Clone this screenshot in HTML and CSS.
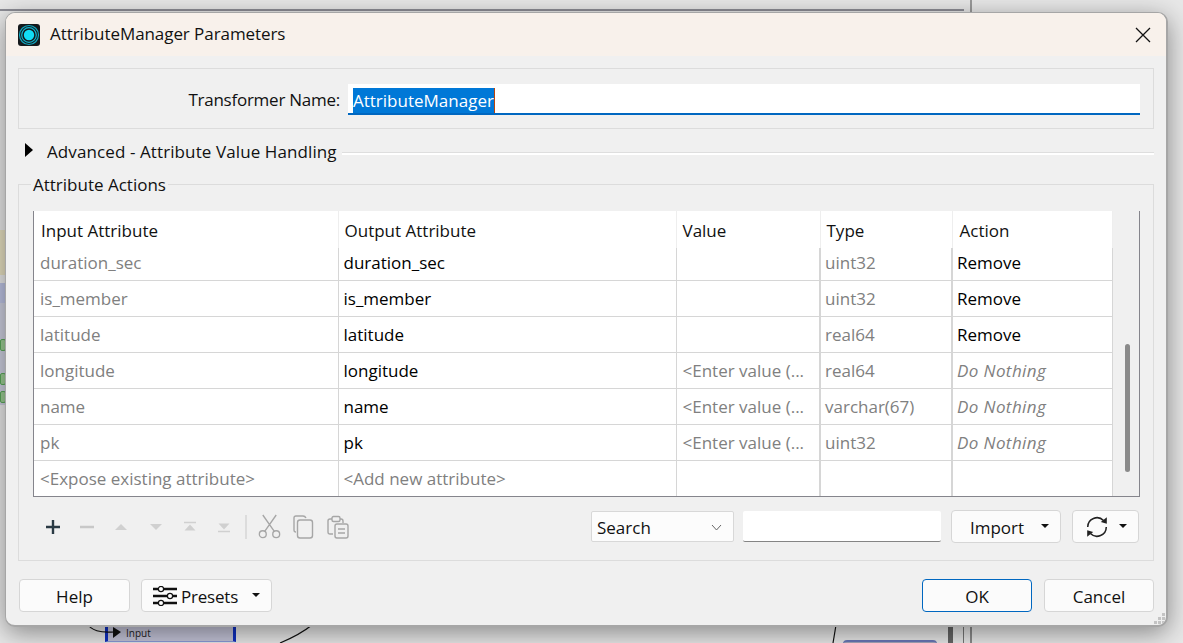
FILE: index.html
```html
<!DOCTYPE html>
<html lang="en">

<head>
    <meta charset="UTF-8">
    <title>AttributeManager Parameters</title>
    <link rel="stylesheet" href="styles.css">
</head>

<body>
    <div class="desktop">
        <!-- workspace showing behind the dialog -->
        <div class="bg-topline"></div>
        <div class="bg-vline"></div>
        <div class="bg-beige"></div>
        <div class="bg-blue"></div>
        <div class="bg-blue-light"></div>
        <div class="bg-green bg-green1"></div>
        <div class="bg-green bg-green2"></div>
        <div class="bg-green bg-green3"></div>
        <div class="bg-node"><span class="bg-node-label">Input</span></div>
        <div class="bg-node2"></div>
        <div class="bg-bar1"></div>
        <div class="bg-bar2"></div>
        <div class="bg-bar3"></div>
        <svg class="bg-wires" width="1183" height="643" viewBox="0 0 1183 643">
            <path d="M85 622 C92 631 100 633 114 632" fill="none" stroke="#111" stroke-width="1.2" />
            <path d="M113 627 L121 632 L113 638 Z" fill="#111" />
            <path d="M312 625 C302 633 292 638 280 643" fill="none" stroke="#111" stroke-width="1.2" />
            <path d="M836 625 L833 643" fill="none" stroke="#111" stroke-width="1.2" />
        </svg>

        <div class="dialog">
            <div class="titlebar">
                <svg class="app-icon" width="22" height="22" viewBox="0 0 22 22">
                    <rect x="0" y="0" width="22" height="22" rx="3" fill="#14191c" />
                    <circle cx="11" cy="11" r="9.5" fill="none" stroke="#0fa5bd" stroke-width="1.2" />
                    <circle cx="11" cy="11" r="7.3" fill="none" stroke="#0fb5d0" stroke-width="1.2" />
                    <circle cx="11" cy="11" r="5.2" fill="#12dcf5" />
                </svg>
                <span class="title-text">AttributeManager Parameters</span>
                <svg class="close-icon" width="16" height="16" viewBox="0 0 16 16">
                    <path d="M1 1 L15 15 M15 1 L1 15" stroke="#111" stroke-width="1.3" fill="none" />
                </svg>
            </div>

            <div class="content">
                <div class="name-group">
                    <label class="name-label" for="tname">Transformer Name:</label>
                    <div class="name-input" id="tname"><span class="selected">AttributeManager</span><span class="caret"></span></div>
                </div>

                <div class="advanced">
                    <span class="arrow-right"></span>
                    <span class="advanced-text">Advanced - Attribute Value Handling</span>
                    <span class="advanced-line"></span>
                </div>

                <fieldset class="actions">
                    <legend>Attribute Actions</legend>

                    <div class="table-wrap">
                        <table class="attr-table">
                            <colgroup>
                                <col class="col-input">
                                <col class="col-output">
                                <col class="col-value">
                                <col class="col-type">
                                <col class="col-action">
                            </colgroup>
                            <thead>
                                <tr>
                                    <th>Input Attribute</th>
                                    <th>Output Attribute</th>
                                    <th>Value</th>
                                    <th>Type</th>
                                    <th>Action</th>
                                </tr>
                            </thead>
                            <tbody>
                                <tr class="clipped">
                                    <td class="muted">duration_sec</td>
                                    <td>duration_sec</td>
                                    <td></td>
                                    <td class="muted">uint32</td>
                                    <td>Remove</td>
                                </tr>
                                <tr>
                                    <td class="muted">is_member</td>
                                    <td>is_member</td>
                                    <td></td>
                                    <td class="muted">uint32</td>
                                    <td>Remove</td>
                                </tr>
                                <tr>
                                    <td class="muted">latitude</td>
                                    <td>latitude</td>
                                    <td></td>
                                    <td class="muted">real64</td>
                                    <td>Remove</td>
                                </tr>
                                <tr>
                                    <td class="muted">longitude</td>
                                    <td>longitude</td>
                                    <td class="muted">&lt;Enter value (...</td>
                                    <td class="muted">real64</td>
                                    <td class="muted italic">Do Nothing</td>
                                </tr>
                                <tr>
                                    <td class="muted">name</td>
                                    <td>name</td>
                                    <td class="muted">&lt;Enter value (...</td>
                                    <td class="muted">varchar(67)</td>
                                    <td class="muted italic">Do Nothing</td>
                                </tr>
                                <tr>
                                    <td class="muted">pk</td>
                                    <td>pk</td>
                                    <td class="muted">&lt;Enter value (...</td>
                                    <td class="muted">uint32</td>
                                    <td class="muted italic">Do Nothing</td>
                                </tr>
                                <tr>
                                    <td class="muted">&lt;Expose existing attribute&gt;</td>
                                    <td class="muted">&lt;Add new attribute&gt;</td>
                                    <td></td>
                                    <td></td>
                                    <td></td>
                                </tr>
                            </tbody>
                        </table>
                        <div class="scrollbar"><div class="thumb"></div></div>
                    </div>

                    <div class="toolbar">
                        <div class="tools">
                            <svg class="tool" width="16" height="16" viewBox="0 0 16 16"><path d="M8 1 V15 M1 8 H15" stroke="#2a3a44" stroke-width="2.4" /></svg>
                            <svg class="tool" width="16" height="16" viewBox="0 0 16 16"><path d="M1 8 H15" stroke="#c8c8c8" stroke-width="2.4" /></svg>
                            <svg class="tool" width="16" height="16" viewBox="0 0 16 16"><path d="M2 11 L8 5 L14 11 Z" fill="#d0d0d0" /></svg>
                            <svg class="tool" width="16" height="16" viewBox="0 0 16 16"><path d="M2 5 L14 5 L8 11 Z" fill="#d0d0d0" /></svg>
                            <svg class="tool" width="16" height="16" viewBox="0 0 16 16"><path d="M2 3.5 H14" stroke="#d0d0d0" stroke-width="1.5" /><path d="M2.5 11.5 L8 5.5 L13.5 11.5 Z" fill="#d0d0d0" /></svg>
                            <svg class="tool" width="16" height="16" viewBox="0 0 16 16"><path d="M2 12.5 H14" stroke="#d0d0d0" stroke-width="1.5" /><path d="M2.5 4.5 L13.5 4.5 L8 10.5 Z" fill="#d0d0d0" /></svg>
                        </div>
                        <span class="tool-sep"></span>
                        <div class="tools-edit">
                            <svg width="23" height="25" viewBox="0 0 24 26" fill="none" stroke="#a6a6a6" stroke-width="1.4">
                                <circle cx="5" cy="21" r="3.6" />
                                <circle cx="19" cy="21" r="3.6" />
                                <path d="M7 18 L19 1 M17 18 L5 1" />
                            </svg>
                            <svg width="22" height="24" viewBox="0 0 22 24" fill="none" stroke="#a6a6a6" stroke-width="1.4">
                                <path d="M3 17 Q1 17 1 15 V3 Q1 1 3 1 H10 Q12 1 13 3" />
                                <rect x="4.5" y="5" width="15" height="18" rx="2.5" />
                            </svg>
                            <svg width="22" height="24" viewBox="0 0 22 24" fill="none" stroke="#a6a6a6" stroke-width="1.4">
                                <path d="M6 19 H3 Q1 19 1 17 V6 Q1 4 3 4 H5 M13 4 H14 Q16 4 16 6 V8" />
                                <rect x="5" y="1.5" width="8" height="5" rx="1.5" />
                                <rect x="8" y="9" width="13" height="14" rx="2" />
                                <path d="M11 14 H18 M11 18 H18" />
                            </svg>
                        </div>
                        <div class="search-select">Search
                            <svg class="chevron" width="11" height="7" viewBox="0 0 11 7"><path d="M1 1 L5.5 6 L10 1" fill="none" stroke="#666" stroke-width="1" /></svg>
                        </div>
                        <div class="search-input"></div>
                        <button class="btn btn-import">Import<span class="drop"></span></button>
                        <button class="btn btn-sync">
                            <svg width="24" height="24" viewBox="0 0 22 22" fill="none" stroke="#222" stroke-width="1.4">
                                <path d="M2.5 11 A8.5 8.5 0 0 1 17 5" />
                                <path d="M19.5 11 A8.5 8.5 0 0 1 5 17" />
                                <path d="M20 2 L20 8 L14.5 6.5 Z" fill="#222" stroke="none" />
                                <path d="M2 20 L2 14 L7.5 15.5 Z" fill="#222" stroke="none" />
                            </svg>
                            <span class="drop"></span>
                        </button>
                    </div>
                </fieldset>

                <div class="footer">
                    <button class="btn btn-foot">Help</button>
                    <button class="btn btn-presets">
                        <svg width="24" height="20" viewBox="0 0 24 20">
                            <path d="M0 3 H24 M0 10 H24 M0 17 H24" stroke="#111" stroke-width="2.4" />
                            <circle cx="8" cy="3" r="2.6" fill="#fff" stroke="#111" stroke-width="1.2" />
                            <circle cx="17" cy="10" r="2.6" fill="#fff" stroke="#111" stroke-width="1.2" />
                            <circle cx="8" cy="17" r="2.6" fill="#fff" stroke="#111" stroke-width="1.2" />
                        </svg>
                        <span class="presets-text">Presets</span>
                        <span class="drop"></span>
                    </button>
                    <span class="footer-space"></span>
                    <button class="btn btn-side btn-ok">OK</button>
                    <button class="btn btn-side">Cancel</button>
                </div>
            </div>

            <svg class="grip" width="11" height="11" viewBox="0 0 11 11">
                <path d="M8 0h3v3H8z M4 4h3v3H4z M8 4h3v3H8z M0 8h3v3H0z M4 8h3v3H4z M8 8h3v3H8z" fill="#c4c4c4" />
            </svg>
        </div>
    </div>
</body>

</html>
```

FILE: styles.css
```css
html,
body {
    margin: 0;
    padding: 0;
    height: 100%;
    overflow: hidden;
}

body {
    font-family: "Open Sans", "Noto Sans", sans-serif;
    font-size: 17px;
    color: #111;
}

.desktop {
    position: relative;
    width: 1183px;
    height: 643px;
    overflow: hidden;
    background: #e8e8e8;
}

/* workspace pieces behind the dialog */
.bg-topline {
    position: absolute;
    left: 0;
    top: 9px;
    width: 964px;
    height: 2px;
    background: #8d8d95;
}

.bg-vline {
    position: absolute;
    left: 970px;
    top: 0;
    width: 2px;
    height: 14px;
    background: #9a9a9a;
}

.bg-beige {
    position: absolute;
    left: 0;
    top: 230px;
    width: 6px;
    height: 45px;
    background: #e6dfc0;
}

.bg-blue {
    position: absolute;
    left: 0;
    top: 283px;
    width: 6px;
    height: 20px;
    background: #bcc2e2;
}

.bg-blue-light {
    position: absolute;
    left: 0;
    top: 303px;
    width: 6px;
    height: 102px;
    background: #cccede;
}

.bg-green {
    position: absolute;
    left: 0;
    width: 6px;
    height: 12px;
    background: #9ccc94;
    border: 1px solid #5aa85a;
    border-radius: 2px;
    box-sizing: border-box;
}

.bg-green1 {
    top: 339px;
}

.bg-green2 {
    top: 373px;
}

.bg-green3 {
    top: 391px;
}

.bg-node {
    position: absolute;
    left: 105px;
    top: 620px;
    width: 131px;
    height: 22px;
    box-sizing: border-box;
    border-left: 3px solid #1030c0;
    border-right: 3px solid #1030c0;
    border-bottom: 1px solid #8a9ad8;
    background: #c4c4d8;
}

.bg-node-label {
    position: absolute;
    left: 18px;
    top: 6px;
    font-size: 10px;
    color: #222;
}

.bg-node2 {
    position: absolute;
    left: 843px;
    top: 640px;
    width: 94px;
    height: 10px;
    border-top: 2px solid #6a78b8;
    border-radius: 4px 4px 0 0;
    background: #a6a8bc;
}

.bg-bar1 {
    position: absolute;
    left: 948px;
    top: 620px;
    width: 5px;
    height: 23px;
    background: #666;
}

.bg-bar2 {
    position: absolute;
    left: 963px;
    top: 620px;
    width: 1px;
    height: 23px;
    background: #777;
}

.bg-bar3 {
    position: absolute;
    left: 970px;
    top: 620px;
    width: 2px;
    height: 23px;
    background: #8c8c8c;
}

.bg-wires {
    position: absolute;
    left: 0;
    top: 0;
}

/* dialog window */
.dialog {
    position: absolute;
    left: 5px;
    top: 12px;
    width: 1163px;
    height: 615px;
    box-sizing: border-box;
    border: 1px solid #a6a6a6;
    border-right-width: 2px;
    border-bottom-width: 2px;
    border-radius: 10px;
    background: #f0f0f0;
    box-shadow: 0 6px 26px rgba(0, 0, 0, 0.42);
    display: flex;
    flex-direction: column;
    overflow: hidden;
}

.titlebar {
    flex: none;
    height: 43px;
    display: flex;
    align-items: center;
    padding: 0 15px 0 12px;
    background: #f8f1eb;
}

.app-icon {
    flex: none;
    margin-right: 10px;
}

.title-text {
    flex: 1;
    margin-bottom: 2px;
    letter-spacing: -0.07px;
}

.content {
    flex: 1;
    display: flex;
    flex-direction: column;
    padding: 12px 12px 0 12px;
}

.name-group {
    flex: none;
    height: 61px;
    box-sizing: border-box;
    border: 1px solid #dcdcdc;
    display: flex;
    align-items: center;
    padding: 1px 13px 0 0;
}

.name-label {
    width: 321px;
    text-align: right;
    margin-right: 8px;
    flex: none;
    letter-spacing: -0.25px;
}

.name-input {
    flex: 1;
    height: 31px;
    box-sizing: border-box;
    background: #fff;
    border-bottom: 2px solid #0067c0;
    padding: 4px 0 0 5px;
    display: flex;
    align-items: flex-start;
}

.selected {
    background: #0078d7;
    color: #fff;
    line-height: 25px;
    height: 25px;
}

.caret {
    width: 1px;
    height: 25px;
    background: #b8450c;
}

.advanced {
    flex: none;
    height: 44px;
    display: flex;
    align-items: center;
}

.arrow-right {
    width: 0;
    height: 0;
    margin: 0 14px 3px 7px;
    border-left: 8px solid #000;
    border-top: 7px solid transparent;
    border-bottom: 7px solid transparent;
}

.advanced-text {
    margin-top: 1px;
    letter-spacing: 0.1px;
}

.advanced-line {
    flex: 1;
    margin: 4px 0 0 5px;
    height: 2px;
    background: #fff;
    border-top: 1px solid #dedede;
}

.actions {
    margin: 0;
    padding: 16px 13px 0 14px;
    height: 388px;
    box-sizing: border-box;
    border: 1px solid #dcdcdc;
    flex: none;
    min-width: 0;
}

.actions legend {
    margin-left: -2px;
    padding: 2px 2px 0;
    line-height: 20px;
}

.table-wrap {
    height: 286px;
    box-sizing: border-box;
    border-left: 1px solid #85858c;
    border-right: 1px solid #85858c;
    border-bottom: 1px solid #85858c;
    display: flex;
    background: #f0f0f0;
}

.attr-table {
    flex: none;
    width: 1078px;
    table-layout: fixed;
    border-collapse: collapse;
    background: #fff;
    align-self: flex-start;
}

.col-input {
    width: 304px;
}

.col-output {
    width: 338px;
}

.col-value {
    width: 144px;
}

.col-type {
    width: 132px;
}

.col-action {
    width: 160px;
}

.attr-table th {
    height: 37px;
    padding: 2px 0 0 6px;
    font-weight: 400;
    text-align: left;
    border-right: 1px solid #eeeeee;
    box-sizing: border-box;
    color: #111;
}

.attr-table td {
    height: 36px;
    padding: 0 0 0 5px;
    box-sizing: border-box;
    border-right: 1px solid #d6d6d6;
    border-bottom: 1px solid #d6d6d6;
    white-space: nowrap;
    overflow: hidden;
    color: #000;
}

.attr-table tr th:first-child {
    padding-left: 7px;
}

.attr-table tr th:last-child {
    padding-left: 7px;
}

.attr-table tr td:first-child,
.attr-table tr td:nth-child(3) {
    padding-left: 6px;
}

.attr-table tr td:nth-child(n+4) {
    padding-left: 4px;
}

.attr-table tr td:nth-child(3),
.attr-table tr td:nth-child(4) {
    border-right-width: 2px;
}

.attr-table tr.clipped td {
    height: 32px;
    padding-bottom: 2px;
}

.attr-table tr:last-child td {
    border-bottom: none;
}

.attr-table td.muted {
    color: #808080;
}

.attr-table td.italic {
    font-style: italic;
    letter-spacing: 0.4px;
}

.scrollbar {
    flex: 1;
    position: relative;
}

.thumb {
    position: absolute;
    left: 12px;
    top: 133px;
    width: 5px;
    height: 128px;
    border-radius: 3px;
    background: #8a8a8a;
}

.toolbar {
    display: flex;
    align-items: center;
    height: 33px;
    margin: 13px 1px 0 0;
}

.tools {
    display: flex;
    align-items: center;
    margin-left: 12px;
    gap: 18.2px;
}

.tool-sep {
    width: 2px;
    height: 24px;
    background: #dcdcdc;
    margin: 0 11px 0 13px;
}

.tools-edit {
    display: flex;
    align-items: center;
    gap: 12px;
    flex: 1;
}

.search-select {
    width: 143px;
    height: 31px;
    box-sizing: border-box;
    background: #fcfcfc;
    border: 1px solid #d8d8d8;
    border-radius: 2px;
    padding: 1px 11px 0 5px;
    display: flex;
    align-items: center;
    justify-content: space-between;
}

.search-input {
    width: 198px;
    height: 31px;
    box-sizing: border-box;
    margin-left: 9px;
    background: #fff;
    border-bottom: 1px solid #858585;
    border-radius: 2px;
}

.btn {
    font: inherit;
    color: #111;
    background: #fbfbfb;
    border: 1px solid #d6d6d6;
    border-radius: 4px;
    height: 33px;
    padding: 1px 0 0;
    box-sizing: border-box;
    display: flex;
    align-items: center;
    justify-content: center;
    position: relative;
}

.drop {
    width: 0;
    height: 0;
    border-left: 4px solid transparent;
    border-right: 4px solid transparent;
    border-top: 4px solid #111;
}

.btn-import {
    width: 110px;
    margin-left: 10px;
    padding-right: 18px;
}

.btn-import .drop {
    position: absolute;
    right: 11px;
    top: 13px;
}

.btn-sync {
    width: 67px;
    margin-left: 11px;
    padding-right: 18px;
}

.btn-sync .drop {
    position: absolute;
    right: 11px;
    top: 13px;
}

.footer {
    display: flex;
    align-items: center;
    margin: 18px 0 0 1px;
    height: 33px;
}

.btn-foot {
    width: 111px;
}

.btn-side {
    width: 110px;
}

.btn-presets {
    width: 131px;
    margin-left: 11px;
    justify-content: flex-start;
    padding-left: 11px;
}

.presets-text {
    margin-left: 4px;
    letter-spacing: -0.2px;
}

.btn-presets .drop {
    position: absolute;
    right: 11px;
    top: 13px;
}

.footer-space {
    flex: 1;
}

.btn-ok {
    border-color: #0067c0;
    margin-right: 12px;
}

.grip {
    position: absolute;
    right: 1px;
    bottom: 1px;
}
```
